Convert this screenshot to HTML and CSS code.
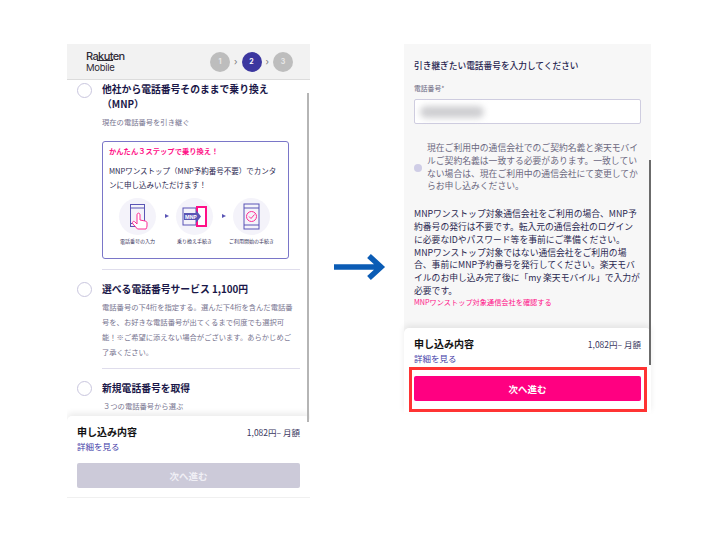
FILE: index.html
```html
<!DOCTYPE html>
<html lang="ja">
<head>
<meta charset="utf-8">
<title>Rakuten Mobile</title>
<link rel="stylesheet" href="styles.css">
</head>
<body>
<main class="stage">
  <section class="phone phone-left">
    <header class="head">
      <div class="logo">
        <span class="logo-top">Rakuten</span>
        <span class="logo-bottom">Mobile</span>
      </div>
      <ol class="steps">
        <li class="step">1</li>
        <li class="sep">›</li>
        <li class="step step-on">2</li>
        <li class="sep">›</li>
        <li class="step">3</li>
      </ol>
    </header>
    <div class="scroll">
      <article class="option option-first">
        <span class="radio"></span>
        <div class="option-body">
          <h2 class="option-title">他社から電話番号そのままで乗り換え<br><span class="mnp">（MNP）</span></h2>
          <p class="desc desc-first">現在の電話番号を引き継ぐ</p>
          <div class="callout">
            <p class="callout-title">かんたん３ステップで乗り換え！</p>
            <p class="callout-text">MNPワンストップ（MNP予約番号不要）でカンタ<br>ンに申し込みいただけます！</p>
            <div class="flow">
              <figure class="flow-item">
                <span class="disc">
                  <svg width="37" height="37" viewBox="0 0 37 37" fill="none">
                    <rect x="11.500" y="6.500" width="14" height="22" stroke="#5a55b5" stroke-width="1"/>
                    <path d="M11.500 10h14M11.500 25.500h3" stroke="#5a55b5" stroke-width="1"/>
                    <path d="M18.500 31l-4.500-5c-1.500-2 .5-3.500 2-2l2 2v-9c0-2.500 3-2.500 3 0v5l5 1c1.500.3 2 1 2 2v3c0 1-.5 2-1 3z" fill="#fff" stroke="#ff2c95" stroke-width="1"/>
                  </svg>
                </span>
                <figcaption>電話番号の入力</figcaption>
              </figure>
              <span class="tri"></span>
              <figure class="flow-item">
                <span class="disc">
                  <svg width="37" height="37" viewBox="0 0 37 37" fill="none">
                    <rect x="7" y="10" width="13" height="17" stroke="#5a55b5" stroke-width="1"/>
                    <rect x="21" y="9" width="9" height="19" fill="#fff" stroke="#ff0f87" stroke-width="2"/>
                    <path d="M8 15h12v-3l5 6.500-5 6.500v-3H8z" fill="#5a55b5"/>
                    <text x="9" y="20.500" class="mnp-mark">MNP</text>
                  </svg>
                </span>
                <figcaption>乗り換え手続き</figcaption>
              </figure>
              <span class="tri"></span>
              <figure class="flow-item">
                <span class="disc">
                  <svg width="37" height="37" viewBox="0 0 37 37" fill="none">
                    <rect x="11" y="6" width="15" height="25" stroke="#5a55b5" stroke-width="1"/>
                    <path d="M11 10h15M11 27h15" stroke="#5a55b5" stroke-width="1"/>
                    <circle cx="18.500" cy="18.500" r="5" stroke="#ff2c95" stroke-width="1"/>
                    <path d="M16 18.500l2 2 3.500-4" stroke="#ff2c95" stroke-width="1"/>
                  </svg>
                </span>
                <figcaption>ご利用開始の手続き</figcaption>
              </figure>
            </div>
          </div>
        </div>
      </article>
      <article class="option option-ruled">
        <span class="radio"></span>
        <div class="option-body">
          <h2 class="option-title">選べる電話番号サービス 1,100円</h2>
          <p class="desc desc-long">電話番号の下4桁を指定する。選んだ下4桁を含んだ電話番<br>号を、お好きな電話番号が出てくるまで何度でも選択可<br>能！※ご希望に添えない場合がございます。あらかじめご<br>了承ください。</p>
        </div>
      </article>
      <article class="option option-ruled">
        <span class="radio"></span>
        <div class="option-body">
          <h2 class="option-title">新規電話番号を取得</h2>
          <p class="desc desc-third">３つの電話番号から選ぶ</p>
        </div>
      </article>
    </div>
    <span class="scrollbar scrollbar-left"></span>
    <footer class="summary summary-left">
      <div class="summary-row">
        <strong class="summary-title">申し込み内容</strong>
        <span class="price">1,082円– 月額</span>
      </div>
      <a class="details">詳細を見る</a>
      <button class="next next-off">次へ進む</button>
    </footer>
  </section>

  <svg class="arrow" width="52" height="28" viewBox="0 0 52 28" fill="none">
    <path d="M0 14h47M35 3l12 11-12 11" stroke="#0b5cb5" stroke-width="5.500"/>
  </svg>

  <section class="phone phone-right">
    <div class="form">
      <h2 class="form-title">引き継ぎたい電話番号を入力してください</h2>
      <label class="field-label">電話番号*</label>
      <div class="field"><span class="blur"></span></div>
      <div class="note">
        <span class="info"></span>
        <p>現在ご利用中の通信会社でのご契約名義と楽天モバイ<br>ルご契約名義は一致する必要があります。一致してい<br>ない場合は、現在ご利用中の通信会社にて変更してか<br>らお申し込みください。</p>
      </div>
      <p class="para">MNPワンストップ対象通信会社をご利用の場合、MNP予<br>約番号の発行は不要です。転入元の通信会社のログイン<br>に必要なIDやパスワード等を事前にご準備ください。<br>MNPワンストップ対象ではない通信会社をご利用の場<br>合、事前にMNP予約番号を発行してください。楽天モバ<br>イルのお申し込み完了後に「my 楽天モバイル」で入力が<br>必要です。</p>
      <a class="link">MNPワンストップ対象通信会社を確認する</a>
    </div>
    <span class="scrollbar scrollbar-right"></span>
    <footer class="summary summary-right">
      <div class="summary-row">
        <strong class="summary-title">申し込み内容</strong>
        <span class="price">1,082円– 月額</span>
      </div>
      <a class="details">詳細を見る</a>
      <button class="next next-on">次へ進む</button>
    </footer>
    <span class="highlight"></span>
  </section>
</main>
</body>
</html>
```

FILE: styles.css
```css
* { box-sizing: border-box; }
html, body { margin: 0; padding: 0; }
body {
  width: 710px;
  height: 533px;
  overflow: hidden;
  background: #fff;
  font-family: "Noto Sans CJK JP", "Noto Sans", sans-serif;
  color: #1d1a4e;
}
p, h2, ol, figure { margin: 0; padding: 0; }
.stage {
  display: flex;
  align-items: flex-start;
  padding: 44px 0 0 67px;
}
.phone { position: relative; flex: none; overflow: hidden; }
.phone-left { width: 243px; height: 454px; display: flex; flex-direction: column; border-bottom: 1px solid #f0f0f0; }
.phone-right { width: 247px; height: 369px; background: #f7f7f7; display: flex; flex-direction: column; overflow: visible; }
.arrow { flex: none; margin: 209px 18px 0 24px; }

.head {
  flex: none;
  height: 36px;
  background: #f2f2f2;
  border-bottom: 1px solid #dcdcdc;
  display: flex;
  align-items: center;
  justify-content: space-between;
  padding: 0 17px 0 19px;
}
.logo { display: flex; flex-direction: column; font-family: "Inter", sans-serif; color: #2f2b36; line-height: 12px; }
.logo-top { position: relative; font-size: 11px; font-weight: 500; letter-spacing: -0.6px; }
.logo-top::after { content: ""; position: absolute; left: 11px; top: 10px; width: 16px; height: 1px; background: #2f2b36; }
.logo-bottom { font-size: 9.500px; font-weight: 400; letter-spacing: -0.3px; }
.steps { list-style: none; display: flex; align-items: center; }
.step {
  width: 20px; height: 20px; border-radius: 50%;
  background: #bdbdbd; color: #e8e8e8;
  font: 700 7px/20px "Inter", sans-serif; text-align: center;
}
.step-on { background: #3c379f; color: #fff; }
.sep { width: 11.500px; text-align: center; font: 400 9px/20px "Inter", sans-serif; color: #777; }

.scroll { flex: 1; min-height: 0; overflow: hidden; padding-right: 10px; }
.option { display: flex; padding-left: 10px; gap: 10px; }
.radio {
  flex: none; width: 15px; height: 15px; border-radius: 50%;
  background: #fff; border: 1px solid #c9c6de;
}
.option-first { padding-top: 3px; }
.option-ruled { position: relative; }
.option-ruled .radio { margin-top: 13px; }
.option-body { flex: 1; min-width: 0; }
.option-ruled .option-body { padding-top: 12px; border-top: 1px solid #dfddec; }
.option-first .option-body { padding-bottom: 10px; margin-top: -1px; }
.option-title { font-size: 9.800px; font-weight: 700; line-height: 15px; color: #1a1748; }
.desc { font-size: 7.300px; color: #77748f; }
.desc-first { line-height: 11px; margin-top: 5px; }
.desc-long { line-height: 15px; margin-top: 3px; padding-bottom: 8px; }
.desc-third { line-height: 11px; margin-top: 5px; padding-left: 1px; }

.callout {
  width: 187px; height: 118px;
  margin-top: 13px;
  border: 1px solid #7a76c8; border-radius: 3px;
  background: #fff;
  padding: 4px 6px 0;
}
.callout-title { font-size: 7.300px; font-weight: 700; line-height: 11px; color: #ff0f87; }
.callout-text { font-size: 7.500px; line-height: 14px; margin-top: 7px; color: #2a2750; white-space: nowrap; }
.flow { display: flex; align-items: flex-start; justify-content: center; margin-top: 6px; width: 171px; }
.flow-item { width: 37px; display: flex; flex-direction: column; align-items: center; }
.flow-item figcaption { font-size: 5px; line-height: 8px; margin-top: 2px; white-space: nowrap; color: #37345a; }
.disc { display: block; width: 37px; height: 37px; border-radius: 50%; background: #f4f3fa; }
.disc svg { display: block; }
.mnp-mark { font: 700 5px "Inter", sans-serif; fill: #fff; }
.tri {
  width: 0; height: 0;
  margin: 15.500px 7px 0 9px;
  border-left: 4px solid #5a55b5;
  border-top: 2.500px solid transparent;
  border-bottom: 2.500px solid transparent;
}

.scrollbar { position: absolute; width: 2px; z-index: 2; }
.scrollbar-left { left: 240px; top: 49px; height: 329px; background: #b5b5b5; }
.scrollbar-right { left: 245px; top: 116px; height: 205px; background: #6b6b6b; }

.summary {
  background: #fff;
  padding: 9px 10px 0;
  border-radius: 5px 5px 0 0;
  box-shadow: 0 -3px 6px rgba(0, 0, 0, 0.08);
}
.summary-left { position: absolute; left: 0; right: 0; bottom: 0; height: 81px; }
.summary-right { flex: none; margin-top: auto; height: 85px; }
.summary-row { display: flex; justify-content: space-between; align-items: center; line-height: 14px; }
.summary-title { font-size: 10px; font-weight: 700; color: #111; }
.price { font-size: 8.500px; color: #3a3760; }
.details { display: block; font-size: 8.500px; line-height: 12px; margin-top: 1px; color: #3f3ca8; }
.next {
  display: block; width: 100%; height: 25px; margin-top: 11px;
  border: 0; border-radius: 2px;
  font: 700 9.500px/25px "Noto Sans CJK JP", sans-serif; color: #fff;
}
.next-off { background: #cccad9; color: #f0eff5; }
.next-on { background: #ff0081; margin-top: 12px; }
.highlight {
  position: absolute; left: 5px; top: 323px; width: 238px; height: 45px;
  border: 3px solid #ff3333;
}

.form { flex: 1; padding: 16px 10px 0; min-height: 0; }
.form-title { font-size: 8.700px; font-weight: 500; line-height: 12px; color: #26234f; }
.field-label { display: block; font-size: 6.800px; line-height: 10px; margin-top: 11px; color: #6a6780; }
.field {
  height: 25px; margin-top: 6px; background: #fff;
  border: 1px solid #cfcde0; border-radius: 2px;
  padding: 6px 5px;
}
.blur { display: block; width: 64px; height: 12px; border-radius: 6px; background: #cfcfd2; filter: blur(3px); }
.note { display: flex; align-items: center; gap: 5px; margin-top: 18px; }
.info { flex: none; width: 8px; height: 8px; border-radius: 50%; background: #cfcde6; }
.note p { font-size: 8.800px; line-height: 12.800px; color: #6b6880; white-space: nowrap; }
.para { font-size: 8.800px; line-height: 12.800px; margin-top: 15px; color: #2a2750; white-space: nowrap; }
.link { display: block; font-size: 7.200px; line-height: 11px; margin-top: -1px; color: #ff0f87; }
```
